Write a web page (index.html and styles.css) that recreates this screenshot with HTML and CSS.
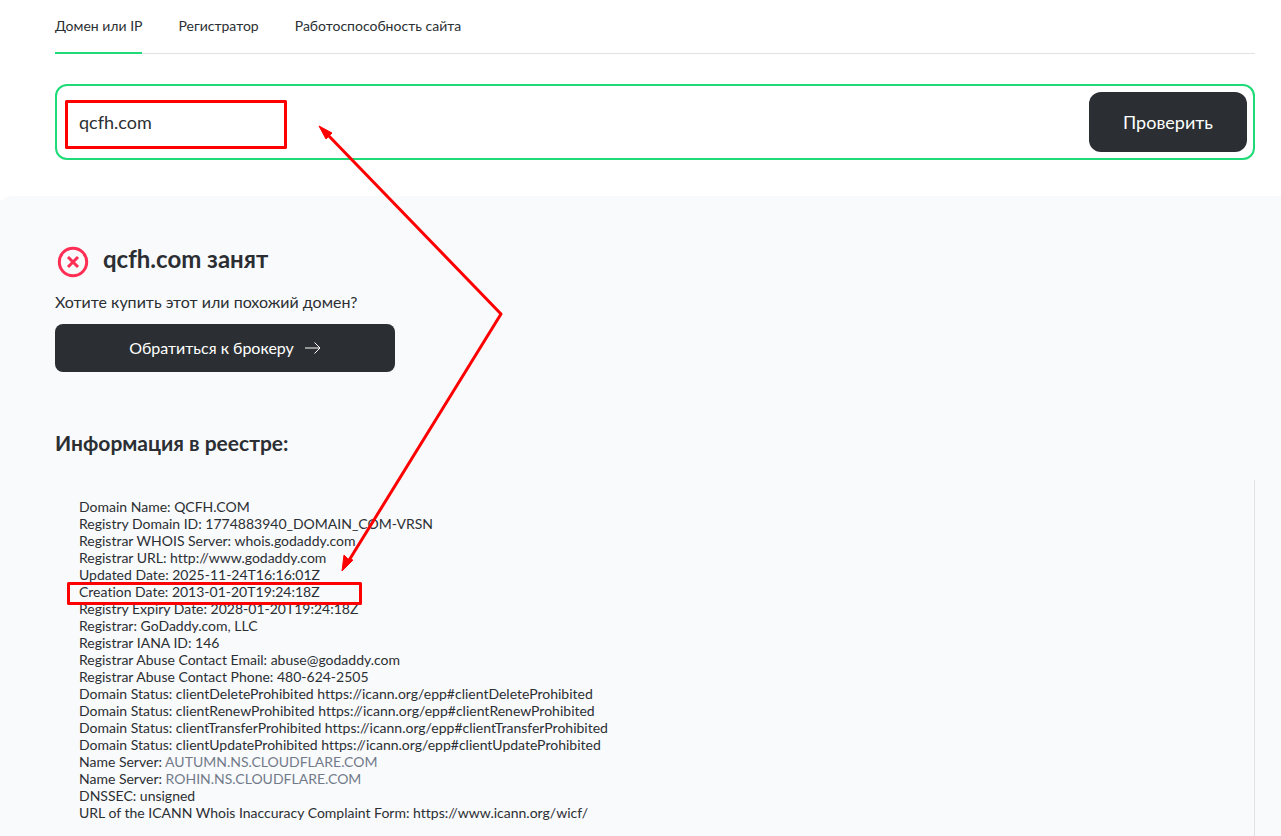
FILE: index.html
```html
<!DOCTYPE html>
<html lang="ru">
<head>
<meta charset="utf-8">
<meta name="viewport" content="width=device-width, initial-scale=1">
<title>Whois: qcfh.com</title>
<link rel="stylesheet" href="styles.css">
</head>
<body>
<header class="top">
  <nav class="tabs">
    <a class="tab tab-active" href="#domain">Домен или IP</a>
    <a class="tab" href="#registrar">Регистратор</a>
    <a class="tab" href="#health">Работоспособность сайта</a>
  </nav>
  <form class="search">
    <input class="search-input" type="text" value="qcfh.com" aria-label="Домен или IP">
    <button class="search-button" type="button">Проверить</button>
  </form>
</header>
<main class="result">
  <div class="status">
    <svg class="status-icon" viewBox="0 0 36 36" aria-hidden="true"><circle cx="18" cy="18" r="13.7"/><path d="M13 13l10 10M23 13l-10 10"/></svg>
    <h1 class="status-title">qcfh.com занят</h1>
  </div>
  <p class="question">Хотите купить этот или похожий домен?</p>
  <a class="broker" href="#broker">Обратиться к брокеру
    <svg class="arrow" viewBox="0 0 16 12" aria-hidden="true"><path d="M0 6h15M9.500 .5L15 6l-5.500 5.500"/></svg>
  </a>
  <h2 class="registry-title">Информация в реестре:</h2>
  <div class="registry">
    <div>Domain Name: QCFH.COM</div>
    <div>Registry Domain ID: 1774883940_DOMAIN_COM-VRSN</div>
    <div>Registrar WHOIS Server: whois.godaddy.com</div>
    <div>Registrar URL: http://www.godaddy.com</div>
    <div>Updated Date: 2025-11-24T16:16:01Z</div>
    <div>Creation Date: 2013-01-20T19:24:18Z</div>
    <div>Registry Expiry Date: 2028-01-20T19:24:18Z</div>
    <div>Registrar: GoDaddy.com, LLC</div>
    <div>Registrar IANA ID: 146</div>
    <div>Registrar Abuse Contact Email: abuse@godaddy.com</div>
    <div>Registrar Abuse Contact Phone: 480-624-2505</div>
    <div>Domain Status: clientDeleteProhibited https://icann.org/epp#clientDeleteProhibited</div>
    <div>Domain Status: clientRenewProhibited https://icann.org/epp#clientRenewProhibited</div>
    <div>Domain Status: clientTransferProhibited https://icann.org/epp#clientTransferProhibited</div>
    <div>Domain Status: clientUpdateProhibited https://icann.org/epp#clientUpdateProhibited</div>
    <div>Name Server: <a class="ns" href="#ns1">AUTUMN.NS.CLOUDFLARE.COM</a></div>
    <div>Name Server: <a class="ns" href="#ns2">ROHIN.NS.CLOUDFLARE.COM</a></div>
    <div>DNSSEC: unsigned</div>
    <div>URL of the ICANN Whois Inaccuracy Complaint Form: https://www.icann.org/wicf/</div>
  </div>
</main>
<svg class="marks" width="520" height="620" viewBox="0 0 520 620" aria-hidden="true">
  <rect x="66.500" y="101.500" width="219" height="46"/>
  <rect x="68.500" y="583.500" width="292" height="20"/>
  <path d="M327 134L501 314L348 562"/>
  <path class="head" d="M319 126L332 133L330 135L326 139ZM342 571L344 555L348 559L353 560Z"/>
</svg>
</body>
</html>
```
FILE: styles.css
```css
* { box-sizing: border-box; }
body {
  margin: 0;
  position: relative;
  overflow: hidden;
  background: #fff;
  color: #2b2f33;
  font: 14px/17px Lato, "Noto Sans", sans-serif;
  font-variant-ligatures: none;
}
a { color: inherit; text-decoration: none; }
.top { padding: 0 26px 36px 55px; }
.tabs {
  display: flex;
  gap: 36px;
  height: 54px;
  border-bottom: 1px solid #e0e2e4;
}
.tab { height: 54px; padding-top: 17px; white-space: nowrap; }
.tab-active { border-bottom: 2px solid #1edb78; }
.search {
  display: flex;
  height: 76px;
  margin-top: 30px;
  padding: 6px;
  border: 2px solid #1edb78;
  border-radius: 12px;
}
.search-input {
  flex: 1;
  min-width: 0;
  padding: 0 16px;
  border: 0;
  outline: 0;
  background: transparent;
  color: inherit;
  font: 18px/24px Lato, "Noto Sans", sans-serif;
  font-variant-ligatures: none;
}
.search-button {
  width: 158px;
  border: 0;
  border-radius: 12px;
  background: #2b2f33;
  color: #fff;
  font: 18px/24px Lato, "Noto Sans", sans-serif;
}
.result {
  min-height: 640px;
  margin-left: -4px;
  padding: 44px 26px 0 59px;
  border-radius: 16px 0 0 0;
  background: #f9fafc;
}
.status { display: flex; gap: 12px; height: 44px; }
.status-icon {
  width: 36px;
  height: 36px;
  margin-top: 4px;
  fill: none;
  stroke: #ff2e55;
  stroke-width: 3;
}
.status-title { margin: 0; font-size: 24px; line-height: 38px; font-weight: 700; }
.question { margin: 7px 0 11px; font-size: 16px; line-height: 22px; }
.broker {
  display: flex;
  align-items: center;
  justify-content: center;
  gap: 11px;
  width: 340px;
  height: 48px;
  border-radius: 8px;
  background: #2b2f33;
  color: #fff;
  font-size: 16px;
  line-height: 22px;
}
.arrow { width: 16px; height: 12px; fill: none; stroke: #fff; stroke-width: 1; }
.registry-title { margin: 57px 0 23px; font-size: 21px; line-height: 28px; font-weight: 700; }
.registry { min-height: 356px; padding: 18px 24px 15px; border-right: 1px solid #dfe1e4; }
.ns { color: #727a8a; }
.marks { position: absolute; top: 0; left: 0; pointer-events: none; fill: none; stroke: #f00; stroke-width: 3; stroke-linejoin: round; }
.head { fill: #f00; stroke-width: 1; }
```
